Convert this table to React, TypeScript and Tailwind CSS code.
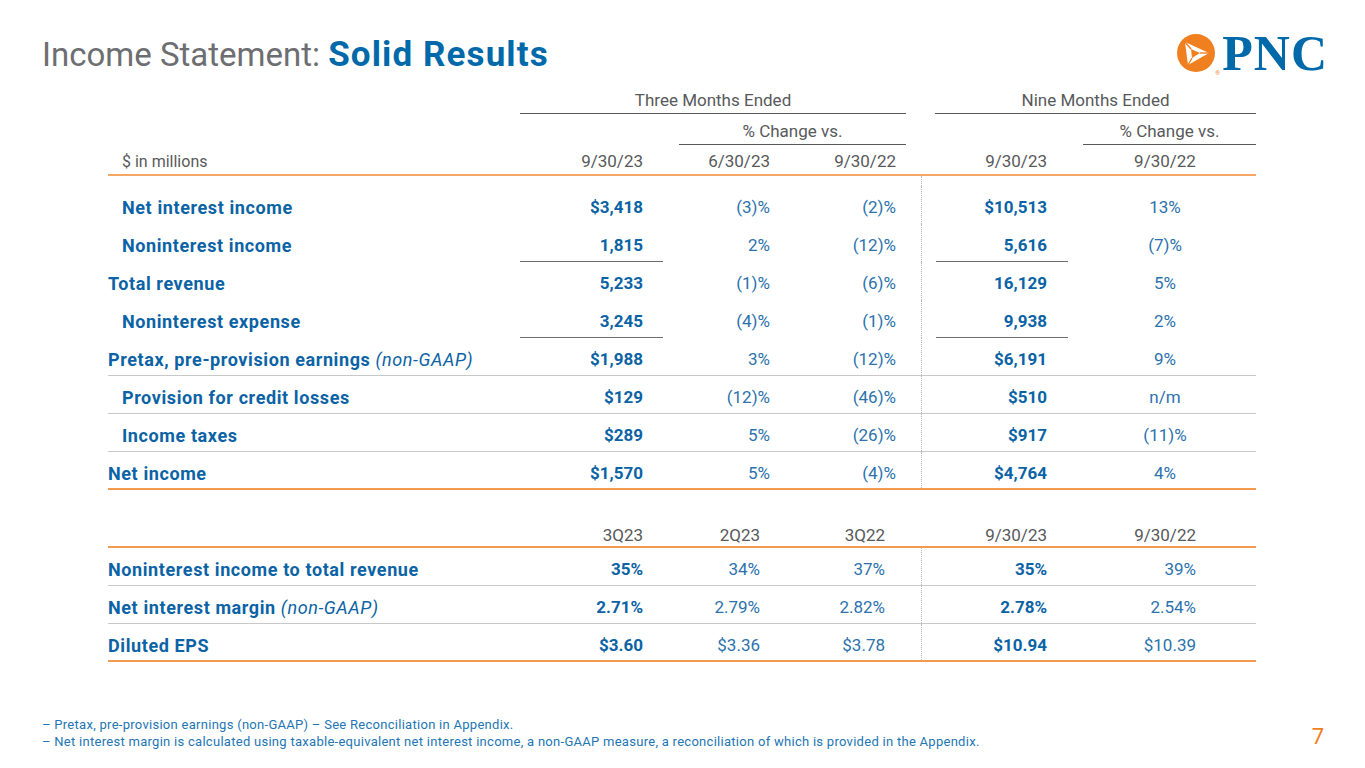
import React from 'react';

type Row = {
  label: string;
  note?: string;
  indent?: boolean;
  v: string[];
  line?: 'short' | 'gray' | 'orange';
};

const cols = 'grid grid-cols-[412px_143px_127px_131px_147px_188px]';

const rows: Row[] = [
  { label: 'Net interest income', indent: true, v: ['$3,418', '(3)%', '(2)%', '$10,513', '13%'] },
  { label: 'Noninterest income', indent: true, v: ['1,815', '2%', '(12)%', '5,616', '(7)%'], line: 'short' },
  { label: 'Total revenue', v: ['5,233', '(1)%', '(6)%', '16,129', '5%'] },
  { label: 'Noninterest expense', indent: true, v: ['3,245', '(4)%', '(1)%', '9,938', '2%'], line: 'short' },
  { label: 'Pretax, pre-provision earnings', note: '(non-GAAP)', v: ['$1,988', '3%', '(12)%', '$6,191', '9%'], line: 'gray' },
  { label: 'Provision for credit losses', indent: true, v: ['$129', '(12)%', '(46)%', '$510', 'n/m'], line: 'gray' },
  { label: 'Income taxes', indent: true, v: ['$289', '5%', '(26)%', '$917', '(11)%'], line: 'gray' },
  { label: 'Net income', v: ['$1,570', '5%', '(4)%', '$4,764', '4%'], line: 'orange' },
];

const ratios: Row[] = [
  { label: 'Noninterest income to total revenue', v: ['35%', '34%', '37%', '35%', '39%'], line: 'gray' },
  { label: 'Net interest margin', note: '(non-GAAP)', v: ['2.71%', '2.79%', '2.82%', '2.78%', '2.54%'], line: 'gray' },
  { label: 'Diluted EPS', v: ['$3.60', '$3.36', '$3.78', '$10.94', '$10.39'], line: 'orange' },
];

const lineClass = {
  short: '',
  gray: 'border-b border-[#c8c8c8]',
  orange: 'border-b-2 border-[#f39a4e]',
  none: '',
};

const bold = 'font-bold text-[#0b63a5]';
const reg = 'font-normal text-[#2c72ad]';

const Logo = () => (
  <div className="relative mr-[37px] mt-[34px] flex items-start">
    <svg width="38" height="38" viewBox="0 0 38 38">
      <circle cx="19" cy="19" r="19" fill="#f0801f" />
      <polygon points="8,8 32,19 11,31" fill="#ffffff" />
      <polygon points="14,15 23,19 15,24" fill="#f0801f" />
      <line x1="8" y1="8" x2="14" y2="15" stroke="#f0801f" strokeWidth="1.4" />
      <line x1="32" y1="19" x2="23" y2="19" stroke="#f0801f" strokeWidth="1.4" />
      <line x1="11" y1="31" x2="15" y2="24" stroke="#f0801f" strokeWidth="1.4" />
    </svg>
    <span className="absolute left-[38px] top-[36px] text-[6px] leading-none text-[#f0801f]">®</span>
    <span className="ml-[7px] font-['Liberation_Serif',serif] text-[50px] font-bold leading-[38px] tracking-[1px] text-[#0069aa]">
      PNC
    </span>
  </div>
);

const DataRow = ({ r, upper }: { r: Row; upper: boolean }) => {
  const short = r.line === 'short';
  return (
    <div className={`${cols} h-[38px] ${lineClass[r.line ?? 'none']} text-[17px] leading-[20px]`}>
      <div className={`pt-[12px] text-[18px] tracking-[0.6px] ${bold} ${r.indent ? 'pl-[14px]' : ''}`}>
        {r.label}
        {r.note && <span className="font-normal italic"> {r.note}</span>}
      </div>
      <div className={`pr-[20px] pt-[11px] text-right ${bold} ${short ? 'border-b border-[#6d6e71]' : ''}`}>
        {r.v[0]}
      </div>
      <div className={`pt-[11px] text-right ${reg} ${upper ? 'pr-[20px]' : 'pr-[30px]'}`}>{r.v[1]}</div>
      <div className={`pt-[11px] text-right ${reg} ${upper ? 'pr-[25px]' : 'pr-[36px]'}`}>{r.v[2]}</div>
      <div className="border-l border-dotted border-[#b8b8b8]">
        <div className={`ml-[14px] h-full pr-[21px] pt-[11px] text-right ${bold} ${short ? 'border-b border-[#6d6e71]' : ''}`}>
          {r.v[3]}
        </div>
      </div>
      <div className={`pt-[11px] ${reg} ${upper ? 'pl-[6px] text-center' : 'pr-[60px] text-right'}`}>{r.v[4]}</div>
    </div>
  );
};

export default function App() {
  return (
    <div className="flex h-[768px] w-[1365px] flex-col overflow-hidden bg-white font-['Roboto',sans-serif]">
      <div className="flex h-[76px] items-start justify-between">
        <h1 className="pl-[42px] pt-[35px] leading-[40px]">
          <span className="text-[33px] font-normal text-[#6d6e71]">Income Statement: </span>
          <span className="text-[35px] font-bold tracking-[1.1px] text-[#0069aa]">Solid Results</span>
        </h1>
        <Logo />
      </div>

      <div className="ml-[108px] mt-[12px] w-[1148px] text-[17px] text-[#58595b]">
        <div className={`${cols} h-[26px]`}>
          <div className="col-span-3 col-start-2 mr-[15px] border-b border-[#58595b] text-center leading-[25px]">
            Three Months Ended
          </div>
          <div className="col-span-2 col-start-5 ml-[14px] border-b border-[#58595b] text-center leading-[25px]">
            Nine Months Ended
          </div>
        </div>
        <div className={`${cols} h-[31px]`}>
          <div className="col-span-2 col-start-3 ml-[16px] mr-[15px] border-b border-[#58595b] pt-[7px] text-center leading-[20px]">
            % Change vs.
          </div>
          <div className="col-start-6 ml-[15px] border-b border-[#58595b] pt-[7px] text-center leading-[20px]">
            % Change vs.
          </div>
        </div>
        <div className={`${cols} h-[31px] border-b-2 border-[#f5a865] leading-[20px]`}>
          <div className="pl-[14px] pt-[7px] text-[16px]">$ in millions</div>
          <div className="pr-[20px] pt-[6px] text-right">9/30/23</div>
          <div className="pr-[20px] pt-[6px] text-right">6/30/23</div>
          <div className="pr-[25px] pt-[6px] text-right">9/30/22</div>
          <div className="pr-[21px] pt-[6px] text-right">9/30/23</div>
          <div className="pl-[6px] pt-[6px] text-center">9/30/22</div>
        </div>
        <div className={`${cols} h-[10px]`}>
          <div className="col-start-5 border-l border-dotted border-[#b8b8b8]" />
        </div>
        {rows.map(r => (
          <DataRow key={r.label} r={r} upper />
        ))}

        <div className="h-[30px]" />
        <div className={`${cols} h-[28px] border-b-2 border-[#f39a4e] leading-[20px]`}>
          <div />
          <div className="pr-[20px] pt-[5px] text-right">3Q23</div>
          <div className="pr-[30px] pt-[5px] text-right">2Q23</div>
          <div className="pr-[36px] pt-[5px] text-right">3Q22</div>
          <div className="pr-[21px] pt-[5px] text-right">9/30/23</div>
          <div className="pr-[60px] pt-[5px] text-right">9/30/22</div>
        </div>
        {ratios.map(r => (
          <DataRow key={r.label} r={r} upper={false} />
        ))}
      </div>

      <div className="flex-1" />
      <div className="flex items-end justify-between pb-[18px] pl-[42px] pr-[41px]">
        <div className="text-[13px] leading-[17px] tracking-[0.28px] text-[#2376b5]">
          <p>– Pretax, pre-provision earnings (non-GAAP) – See Reconciliation in Appendix.</p>
          <p>
            – Net interest margin is calculated using taxable-equivalent net interest income, a non-GAAP measure, a
            reconciliation of which is provided in the Appendix.
          </p>
        </div>
        <div className="text-[22px] leading-[26px] text-[#f0801f]">7</div>
      </div>
    </div>
  );
}
